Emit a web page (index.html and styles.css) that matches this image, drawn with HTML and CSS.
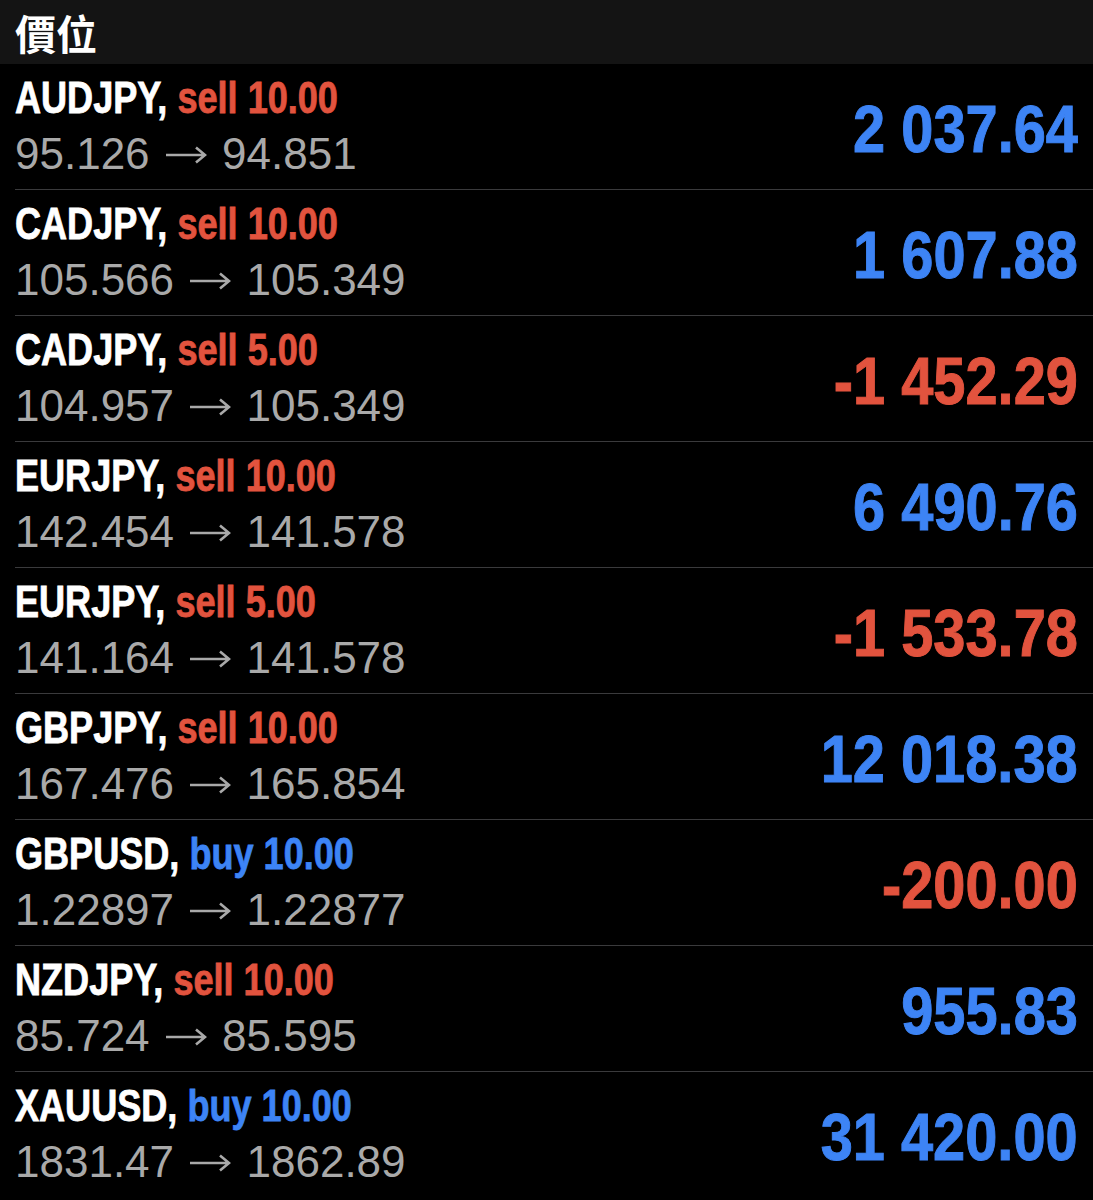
FILE: index.html
```
<!DOCTYPE html>
<html lang="zh-Hant">
<head>
    <meta charset="UTF-8">
    <meta name="viewport" content="width=device-width, initial-scale=1.0">
    <title>價位</title>
    <link rel="stylesheet" href="styles.css">
</head>
<body>

    <header class="section-head">價位</header>

    <div class="positions">
        <div class="row">
            <div class="info">
                <div class="title">AUDJPY, <span class="sell">sell 10.00</span></div>
                <div class="prices">95.126 <svg class="arrow" viewBox="0 0 42 20"><path d="M1 10H40M31 2.5L40 10L31 17.5"/></svg> 94.851</div>
            </div>
            <div class="profit up">2 037.64</div>
        </div>
        <div class="row">
            <div class="info">
                <div class="title">CADJPY, <span class="sell">sell 10.00</span></div>
                <div class="prices">105.566 <svg class="arrow" viewBox="0 0 42 20"><path d="M1 10H40M31 2.5L40 10L31 17.5"/></svg> 105.349</div>
            </div>
            <div class="profit up">1 607.88</div>
        </div>
        <div class="row">
            <div class="info">
                <div class="title">CADJPY, <span class="sell">sell 5.00</span></div>
                <div class="prices">104.957 <svg class="arrow" viewBox="0 0 42 20"><path d="M1 10H40M31 2.5L40 10L31 17.5"/></svg> 105.349</div>
            </div>
            <div class="profit down">-1 452.29</div>
        </div>
        <div class="row">
            <div class="info">
                <div class="title">EURJPY, <span class="sell">sell 10.00</span></div>
                <div class="prices">142.454 <svg class="arrow" viewBox="0 0 42 20"><path d="M1 10H40M31 2.5L40 10L31 17.5"/></svg> 141.578</div>
            </div>
            <div class="profit up">6 490.76</div>
        </div>
        <div class="row">
            <div class="info">
                <div class="title">EURJPY, <span class="sell">sell 5.00</span></div>
                <div class="prices">141.164 <svg class="arrow" viewBox="0 0 42 20"><path d="M1 10H40M31 2.5L40 10L31 17.5"/></svg> 141.578</div>
            </div>
            <div class="profit down">-1 533.78</div>
        </div>
        <div class="row">
            <div class="info">
                <div class="title">GBPJPY, <span class="sell">sell 10.00</span></div>
                <div class="prices">167.476 <svg class="arrow" viewBox="0 0 42 20"><path d="M1 10H40M31 2.5L40 10L31 17.5"/></svg> 165.854</div>
            </div>
            <div class="profit up">12 018.38</div>
        </div>
        <div class="row">
            <div class="info">
                <div class="title">GBPUSD, <span class="buy">buy 10.00</span></div>
                <div class="prices">1.22897 <svg class="arrow" viewBox="0 0 42 20"><path d="M1 10H40M31 2.5L40 10L31 17.5"/></svg> 1.22877</div>
            </div>
            <div class="profit down">-200.00</div>
        </div>
        <div class="row">
            <div class="info">
                <div class="title">NZDJPY, <span class="sell">sell 10.00</span></div>
                <div class="prices">85.724 <svg class="arrow" viewBox="0 0 42 20"><path d="M1 10H40M31 2.5L40 10L31 17.5"/></svg> 85.595</div>
            </div>
            <div class="profit up">955.83</div>
        </div>
        <div class="row">
            <div class="info">
                <div class="title">XAUUSD, <span class="buy">buy 10.00</span></div>
                <div class="prices">1831.47 <svg class="arrow" viewBox="0 0 42 20"><path d="M1 10H40M31 2.5L40 10L31 17.5"/></svg> 1862.89</div>
            </div>
            <div class="profit up">31 420.00</div>
        </div>
    </div>

</body>
</html>
```

FILE: styles.css
```
body {
    margin: 0;
    padding: 0;
    background-color: #000;
    color: #fff;
    font-family: "Liberation Sans", Arial, sans-serif;
}
.section-head {
    height: 64px;
    box-sizing: border-box;
    padding: 7px 15px 0;
    background-color: #141414;
    font-family: "Noto Sans CJK TC", sans-serif;
    font-weight: 700;
    font-size: 41px;
    line-height: 50px;
}
.positions {
    padding-left: 15px;
}
.row {
    display: flex;
    align-items: center;
    justify-content: space-between;
    height: 125px;
    padding-right: 15px;
    border-bottom: 1px solid #3a3a3c;
}
.row:last-child {
    border-bottom: none;
}
.info {
    padding-top: 2px;
}
/* no condensed face installed, so squeeze the bold one */
.title {
    font-weight: 700;
    font-size: 44px;
    line-height: 52px;
    white-space: nowrap;
    -webkit-text-stroke: 0.8px #fff;
    transform: scaleX(0.82);
    transform-origin: left center;
}
.prices {
    color: #a9a9a9;
    font-size: 44px;
    line-height: 60px;
    white-space: nowrap;
}
.arrow {
    width: 42px;
    height: 20px;
    margin: 0 3px;
    vertical-align: 4px;
    fill: none;
    stroke: #a9a9a9;
    stroke-width: 2.6;
}
.sell {
    color: #e2533e;
    -webkit-text-stroke-color: #e2533e;
}
.buy {
    color: #3d84f5;
    -webkit-text-stroke-color: #3d84f5;
}
.profit {
    font-weight: 700;
    font-size: 66px;
    padding-top: 4px;
    white-space: nowrap;
    -webkit-text-stroke: 1px currentColor;
    transform: scaleX(0.875);
    transform-origin: right center;
}
.profit.up {
    color: #3d84f5;
}
.profit.down {
    color: #e2533e;
}
```
